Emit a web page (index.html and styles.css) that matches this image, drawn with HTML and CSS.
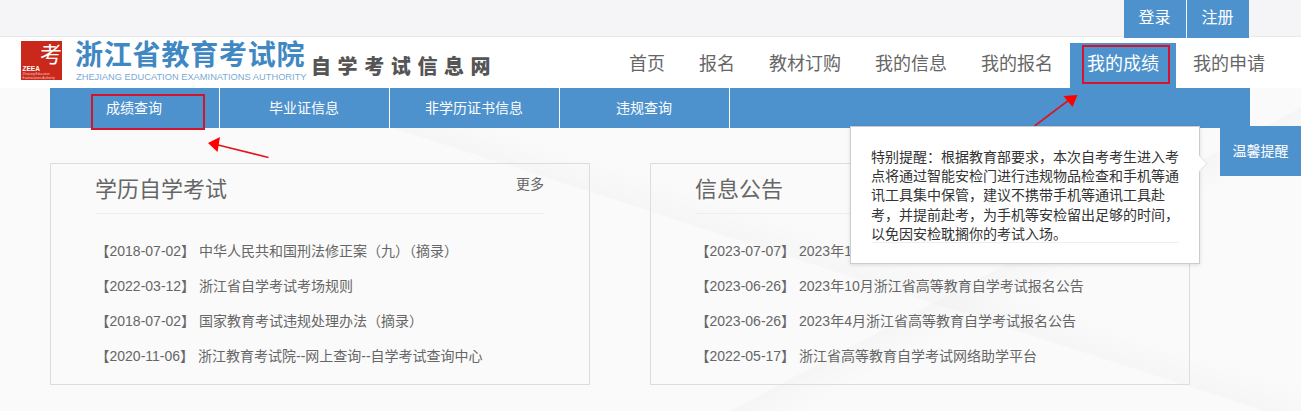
FILE: index.html
```html
<!DOCTYPE html>
<html lang="zh-CN">
<head>
<meta charset="utf-8">
<title>浙江省自学考试信息网</title>
<link rel="stylesheet" href="styles.css">
</head>
<body>
<div class="page">
  <div class="topbar">
    <a class="top-btn">登录</a>
    <a class="top-btn">注册</a>
  </div>
  <header class="header">
    <div class="brand">
      <svg class="logo" width="41" height="39" viewBox="0 0 41 39" aria-hidden="true">
        <rect width="41" height="39" fill="#c9281a"/>
        <text x="19" y="21" class="logo-kao">考</text>
        <text x="1.5" y="29.5" class="logo-zeea">ZEEA</text>
        <text x="1.5" y="33.8" class="logo-small">Zhejiang Education</text>
        <text x="1.5" y="37.6" class="logo-small">Examinations Authority</text>
      </svg>
      <div class="brand-name">
        <div class="brand-cn">浙江省教育考试院</div>
        <div class="brand-en">ZHEJIANG EDUCATION EXAMINATIONS AUTHORITY</div>
      </div>
      <div class="brand-tag">自学考试信息网</div>
    </div>
    <nav class="nav">
      <a class="nav-item">首页</a>
      <a class="nav-item">报名</a>
      <a class="nav-item">教材订购</a>
      <a class="nav-item">我的信息</a>
      <a class="nav-item">我的报名</a>
      <a class="nav-item nav-active">我的成绩</a>
      <a class="nav-item">我的申请</a>
    </nav>
  </header>
  <main class="main">
    <div class="subnav">
      <a class="sub-item">成绩查询</a>
      <a class="sub-item">毕业证信息</a>
      <a class="sub-item">非学历证书信息</a>
      <a class="sub-item">违规查询</a>
    </div>
    <div class="cards">
      <section class="card">
        <div class="card-head">
          <h2 class="card-title">学历自学考试</h2>
          <a class="card-more">更多</a>
        </div>
        <ul class="list">
          <li>【2018-07-02】 中华人民共和国刑法修正案（九）（摘录）</li>
          <li>【2022-03-12】 浙江省自学考试考场规则</li>
          <li>【2018-07-02】 国家教育考试违规处理办法（摘录）</li>
          <li>【2020-11-06】 浙江教育考试院--网上查询--自学考试查询中心</li>
        </ul>
      </section>
      <section class="card">
        <div class="card-head">
          <h2 class="card-title">信息公告</h2>
        </div>
        <ul class="list">
          <li>【2023-07-07】 2023年10月浙江省高等教育自学考试公告</li>
          <li>【2023-06-26】 2023年10月浙江省高等教育自学考试报名公告</li>
          <li>【2023-06-26】 2023年4月浙江省高等教育自学考试报名公告</li>
          <li>【2022-05-17】 浙江省高等教育自学考试网络助学平台</li>
        </ul>
      </section>
    </div>
  </main>

  <div class="popup">
    <p class="popup-text">特别提醒：根据教育部要求，本次自考考生进入考点将通过智能安检门进行违规物品检查和手机等通讯工具集中保管，建议不携带手机等通讯工具赴考，并提前赴考，为手机等安检留出足够的时间，以免因安检耽搁你的考试入场。</p>
    <div class="popup-rule"></div>
  </div>
  <a class="side-btn">温馨提醒</a>

  <div class="mark mark-sub"></div>
  <div class="mark mark-nav"></div>
  <svg class="arrows" width="1301" height="411" viewBox="0 0 1301 411" aria-hidden="true">
    <path d="M268.5 157.5 L214 144" fill="none" stroke="#e3141c" stroke-width="1.6"/>
    <path d="M208 143 L220 137 L217.5 152 Z" fill="#f00"/>
    <path d="M1034.5 126 L1069 100" fill="none" stroke="#d5182a" stroke-width="1.6"/>
    <path d="M1077.5 95 L1063.5 96 L1072.5 107 Z" fill="#f00"/>
  </svg>
</div>
</body>
</html>
```
FILE: styles.css
```css
* { box-sizing: border-box; }
html, body { margin: 0; padding: 0; }
body {
  font-family: "Liberation Sans", "Noto Sans CJK SC", sans-serif;
  font-size: 14px;
  color: #666;
  background: #fafafa;
}
.page { position: relative; width: 1301px; height: 411px; overflow: hidden; }

.topbar {
  display: flex;
  justify-content: flex-end;
  gap: 1px;
  height: 37px;
  padding-right: 52px;
  background: #f5f5f7;
  border-bottom: 1px solid #e9e9e9;
}
.top-btn {
  width: 62px;
  height: 38px;
  padding-right: 1px;
  line-height: 36px;
  text-align: center;
  font-size: 16px;
  color: #fff;
  background: #4e92cd;
  position: relative;
  z-index: 1;
}

.header {
  display: flex;
  justify-content: space-between;
  height: 51px;
  padding: 0 19px 0 21px;
  background: #fff;
}
.brand { display: flex; align-items: flex-start; padding-top: 4px; }
.logo { display: block; flex: none; overflow: visible; }
.logo-kao { font: 400 22px "Noto Sans CJK SC", sans-serif; fill: #fff; }
.logo-zeea { font: bold 6.5px "Liberation Sans", sans-serif; fill: #fff; }
.logo-small { font: 3.2px "Liberation Sans", sans-serif; fill: #f3c9c0; }
.brand-name { margin-left: 13px; width: 232px; }
.brand-cn {
  font-size: 28px;
  font-weight: 700;
  line-height: 29px;
  letter-spacing: 0.8px;
  color: #3f88c3;
  white-space: nowrap;
}
.brand-en {
  margin: 2px 0 0 1px;
  font-size: 9.3px;
  line-height: 10px;
  color: #7aaad4;
  white-space: nowrap;
}
.brand-tag {
  margin: 15px 0 0 4px;
  font-size: 20px;
  font-weight: 900;
  line-height: 22px;
  letter-spacing: 6.6px;
  color: #555;
  white-space: nowrap;
}
.nav { display: flex; margin-top: 6px; height: 45px; }
.nav-item {
  padding: 0 17px;
  font-size: 18px;
  line-height: 43px;
  color: #666;
}
.nav-active { background: #4e92cd; color: #fff; }

.main {
  height: 323px;
  padding: 0 50px;
  background:
    linear-gradient(152deg, transparent 70%, rgba(235,235,235,.3) 70.2%, transparent 74%),
    linear-gradient(18deg, transparent 55%, rgba(238,238,238,.35) 55.2%, transparent 60%),
    #fafafa;
}
.subnav {
  display: flex;
  width: 1200px;
  height: 40px;
  background: #4e92cd;
}
.sub-item {
  width: 170px;
  height: 40px;
  padding-right: 1px;
  line-height: 40px;
  text-align: center;
  font-size: 14px;
  color: #fff;
  border-right: 1px solid #fff;
}
.cards { display: flex; gap: 60px; margin-top: 35px; }
.card {
  width: 540px;
  height: 222px;
  padding: 0 45px;
  border: 1px solid #ddd;
}
.card-head {
  display: flex;
  justify-content: space-between;
  height: 50px;
  border-bottom: 1px solid #eee;
}
.card-title {
  margin: 0 0 0 -1px;
  font-size: 22px;
  font-weight: 400;
  line-height: 52px;
  color: #666;
}
.card-more { font-size: 14px; line-height: 40px; color: #666; }
.list { list-style: none; margin: 20px 0 0; padding: 0; }
.list li {
  height: 35px;
  line-height: 35px;
  font-size: 14px;
  color: #666;
  white-space: nowrap;
  text-indent: -0.5px;
}

.popup {
  position: absolute;
  left: 850px;
  top: 126px;
  width: 350px;
  height: 138px;
  padding: 21px 18px 0 21px;
  background: #fff;
  border: 1px solid #ccc;
  box-shadow: 0 1px 4px rgba(0,0,0,.12);
  z-index: 3;
}
.popup::after {
  content: "";
  position: absolute;
  right: -8px;
  top: 29px;
  width: 14px;
  height: 14px;
  background: #fff;
  transform: rotate(45deg) scale(.75);
  border-top: 1px solid #ddd;
  border-right: 1px solid #ddd;
}
.popup-text {
  margin: 0 0 0 -1px;
  font-size: 14px;
  line-height: 19.2px;
  color: #333;
}
.popup-rule {
  margin: -2px 2px 0 0;
  height: 1px;
  background: #eee;
}
.side-btn {
  position: absolute;
  left: 1220px;
  top: 126px;
  width: 81px;
  height: 50px;
  line-height: 50px;
  text-align: center;
  font-size: 14px;
  color: #fff;
  background: #4e92cd;
  z-index: 2;
}
.mark {
  position: absolute;
  border: 2px solid #d3142c;
  z-index: 4;
}
.mark-sub { left: 91px; top: 94px; width: 114px; height: 36px; }
.mark-nav { left: 1082px; top: 45px; width: 88px; height: 39px; }
.arrows { position: absolute; left: 0; top: 0; z-index: 2; pointer-events: none; }
```
